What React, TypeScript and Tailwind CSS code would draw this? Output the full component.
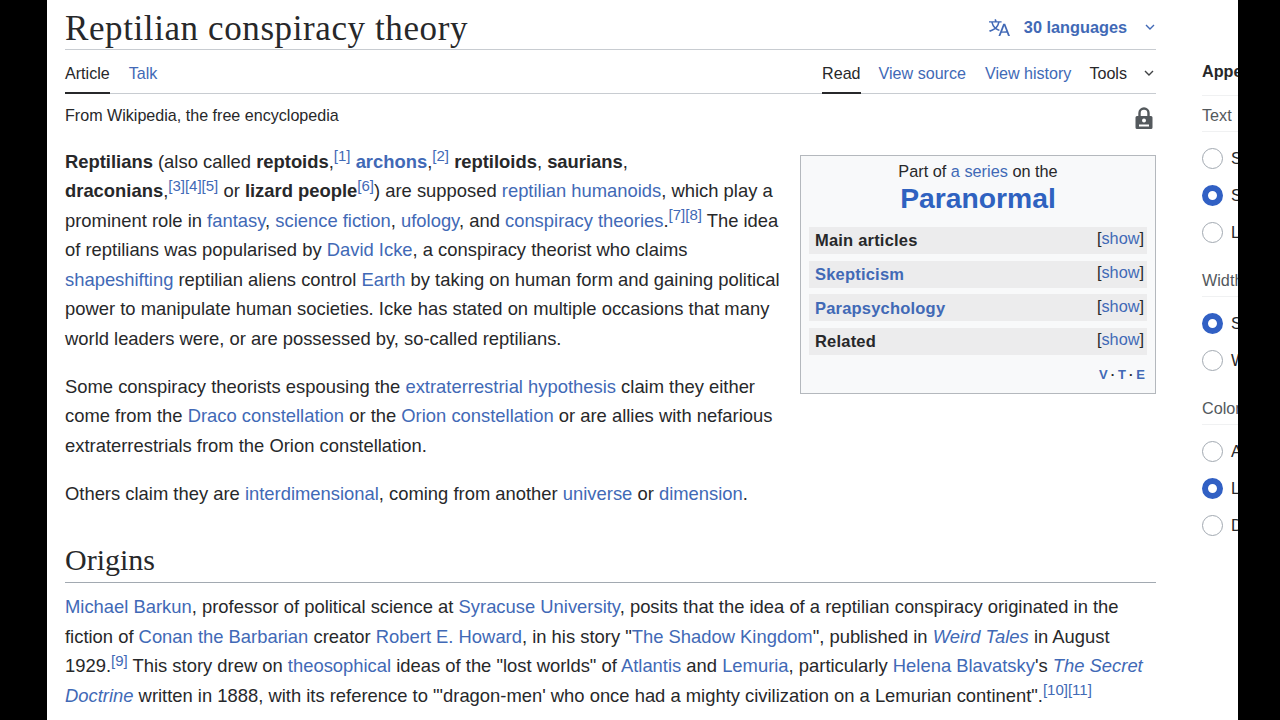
import type { ReactNode } from "react";

const L = ({ children }: { children: ReactNode }) => (
  <a className="text-[#4169b6]">{children}</a>
);

const Ref = ({ children }: { children: ReactNode }) => (
  <sup className="text-[15px] leading-none text-[#4169b6] align-baseline top-[-6.5px]">{children}</sup>
);

const B = ({ children }: { children: ReactNode }) => (
  <b className="font-bold">{children}</b>
);

function Chevron({ className }: { className?: string }) {
  return (
    <svg viewBox="0 0 12 12" className={className} fill="none" stroke="currentColor" strokeWidth="1.4">
      <path d="M2 4l4 4 4-4" />
    </svg>
  );
}

function NavRow({ title, linked }: { title: string; linked?: boolean }) {
  return (
    <div className="h-[27px] bg-[#ececed] flex items-center justify-between pl-[6px] pr-[3px]">
      <span className={`text-[16.5px] font-bold tracking-[0.2px] ${linked ? "text-[#4169b6]" : "text-[#27282a]"}`}>{title}</span>
      <span className="text-[16.3px] -mt-[4px]">
        [<L>show</L>]
      </span>
    </div>
  );
}

function Radio({ on }: { on?: boolean }) {
  return on ? (
    <div className="w-[21px] h-[21px] rounded-full border-[6px] border-[#3160c4] bg-white" />
  ) : (
    <div className="w-[21px] h-[21px] rounded-full border border-[#a2a9b1] bg-white" />
  );
}

function SideGroup({ label, opts }: { label: string; opts: [string, boolean][] }) {
  return (
    <div className="mb-[26px]">
      <div className="text-[16.2px] leading-[22px] text-[#54595d] h-[28px] border-b border-[#f0f1f2] whitespace-nowrap">{label}</div>
      <div className="flex flex-col gap-[16px] mt-[16px]">
        {opts.map(([o, on], i) => (
          <div key={i} className="flex items-center gap-[8px] h-[21px]">
            <Radio on={on} />
            <span className="text-[16.2px] whitespace-nowrap">{o}</span>
          </div>
        ))}
      </div>
    </div>
  );
}

export default function App() {
  return (
    <div
      className="w-[1280px] h-[720px] overflow-hidden bg-black flex text-[#27282a]"
      style={{ fontFamily: '"Liberation Sans", Arial, sans-serif' }}
    >
      <div className="ml-[47px] w-[1191px] h-[720px] bg-white overflow-hidden flex pl-[18px]">
        <main className="w-[1091px] shrink-0">
          <div className="h-[50px] border-b border-[#c8ccd1] flex items-start justify-between">
            <h1
              className="text-[35px] tracking-[0.6px] leading-[58px] whitespace-nowrap"
              style={{ fontFamily: '"Liberation Serif", serif' }}
            >
              Reptilian conspiracy theory
            </h1>
            <div className="flex items-center h-[54px] text-[#4169b6]">
              <svg viewBox="0 0 20 20" className="w-[21px] h-[21px]" fill="currentColor">
                <path d="M20 18h-1.44a.6.6 0 0 1-.4-.12.8.8 0 0 1-.23-.31L17 15h-5l-1 2.54a.8.8 0 0 1-.22.3.6.6 0 0 1-.4.14H9l4.55-11.47h1.89zm-3.53-4.31L14.89 9.5a12 12 0 0 1-.39-1.24q-.09.37-.19.69l-.19.56-1.58 4.19zm-6.3-1.58a13.4 13.4 0 0 1-2.91-1.41 11.46 11.46 0 0 0 2.81-5.37H12V4H7.31a4 4 0 0 0-.2-.56C6.87 2.79 6.6 2 6.6 2l-1.47.5s.4.89.6 1.5H0v1.33h2.15A11.23 11.23 0 0 0 5 10.7a17.2 17.2 0 0 1-5 2.1q.56.82.87 1.38a23.3 23.3 0 0 0 5.22-2.51 15.6 15.6 0 0 0 3.56 1.77zM3.63 5.33h4.91a8.1 8.1 0 0 1-2.45 4.45 9.1 9.1 0 0 1-2.46-4.45" />
              </svg>
              <span className="ml-[14px] text-[16.3px] font-bold">30 languages</span>
              <Chevron className="w-[12px] h-[12px] ml-[17px] mr-0" />
            </div>
          </div>

          <div className="h-[44px] border-b border-[#c8ccd1] flex justify-between text-[16.1px]">
            <div className="flex">
              <div className="h-[44px] border-b-2 border-[#27282a] leading-[46px]">Article</div>
              <div className="ml-[19px] leading-[46px] text-[#4169b6]">Talk</div>
            </div>
            <div className="flex">
              <div className="h-[44px] border-b-2 border-[#27282a] leading-[46px]">Read</div>
              <div className="ml-[18px] leading-[46px] text-[#4169b6]">View source</div>
              <div className="ml-[19px] leading-[46px] text-[#4169b6]">View history</div>
              <div className="ml-[18px] leading-[46px]">Tools</div>
              <div className="flex items-center ml-[16px] mr-[1px] mt-[2px] text-[#404244]">
                <Chevron className="w-[12px] h-[12px]" />
              </div>
            </div>
          </div>

          <div className="relative h-[46px] text-[16.1px] leading-[43px]">
            From Wikipedia, the free encyclopedia
            <svg viewBox="0 0 20 24" className="absolute right-[2px] top-[12px] w-[20px] h-[24px]" fill="#54595d">
              <path d="M3 10h14a1.5 1.5 0 0 1 1.5 1.5v10A1.5 1.5 0 0 1 17 23H3a1.5 1.5 0 0 1-1.5-1.5v-10A1.5 1.5 0 0 1 3 10z" />
              <path d="M5.5 10V7a4.5 4.5 0 0 1 9 0v3" fill="none" stroke="#54595d" strokeWidth="2.4" />
              <circle cx="10" cy="14.5" r="2" fill="#fff" />
              <rect x="5" y="18.5" width="10" height="2" fill="#fff" />
            </svg>
          </div>

          <div className="flex justify-between items-start">
            <div className="text-[18.4px] leading-[29.5px] whitespace-nowrap mt-[6.5px]">
              <B>Reptilians</B> (also called <B>reptoids</B>,<Ref>[1]</Ref> <a className="text-[#4169b6] font-bold">archons</a>,<Ref>[2]</Ref> <B>reptiloids</B>, <B>saurians</B>,<br />
              <B>draconians</B>,<Ref>[3][4][5]</Ref> or <B>lizard people</B><Ref>[6]</Ref>) are supposed <L>reptilian humanoids</L>, which play a<br />
              prominent role in <L>fantasy</L>, <L>science fiction</L>, <L>ufology</L>, and <L>conspiracy theories</L>.<Ref>[7][8]</Ref> The idea<br />
              of reptilians was popularised by <L>David Icke</L>, a conspiracy theorist who claims<br />
              <L>shapeshifting</L> reptilian aliens control <L>Earth</L> by taking on human form and gaining political<br />
              power to manipulate human societies. Icke has stated on multiple occasions that many<br />
              world leaders were, or are possessed by, so-called reptilians.
              <p className="mt-[18.5px]">
                Some conspiracy theorists espousing the <L>extraterrestrial hypothesis</L> claim they either<br />
                come from the <L>Draco constellation</L> or the <L>Orion constellation</L> or are allies with nefarious<br />
                extraterrestrials from the Orion constellation.
              </p>
              <p className="mt-[18.5px]">
                Others claim they are <L>interdimensional</L>, coming from another <L>universe</L> or <L>dimension</L>.
              </p>
            </div>

            <aside className="w-[356px] h-[239px] mt-[15px] border border-[#b4b8bd] bg-[#f8f9fa] px-[8px] pt-[6px] shrink-0">
              <div className="text-center text-[16.3px] leading-[19px]">
                Part of <L>a series</L> on the
              </div>
              <div className="text-center text-[28.3px] leading-[33px] font-bold mt-[1px] text-[#2f62c0]">Paranormal</div>
              <div className="flex flex-col gap-[6.7px] mt-[12px]">
                <NavRow title="Main articles" />
                <NavRow title="Skepticism" linked />
                <NavRow title="Parapsychology" linked />
                <NavRow title="Related" />
              </div>
              <div className="text-right text-[13px] font-bold mt-[10px] -mr-[1px] text-[#4169b6] tracking-[3px]">
                V<span className="text-[#27282a]">·</span>T<span className="text-[#27282a]">·</span>E
              </div>
            </aside>
          </div>

          <h2
            className="text-[30px] leading-[36px] h-[41px] mt-[33.5px] border-b border-[#a2a9b1]"
            style={{ fontFamily: '"Liberation Serif", serif' }}
          >
            Origins
          </h2>
          <div className="text-[18.4px] leading-[29.5px] whitespace-nowrap mt-[9.5px]">
            <L>Michael Barkun</L>, professor of political science at <L>Syracuse University</L>, posits that the idea of a reptilian conspiracy originated in the<br />
            fiction of <L>Conan the Barbarian</L> creator <L>Robert E. Howard</L>, in his story "<L>The Shadow Kingdom</L>", published in <i><L>Weird Tales</L></i> in August<br />
            1929.<Ref>[9]</Ref> This story drew on <L>theosophical</L> ideas of the "lost worlds" of <L>Atlantis</L> and <L>Lemuria</L>, particularly <L>Helena Blavatsky</L>'s <i><L>The Secret</L></i><br />
            <i><L>Doctrine</L></i> written in 1888, with its reference to "'dragon-men' who once had a mighty civilization on a Lemurian continent".<Ref>[10][11]</Ref>
          </div>
        </main>

        <div className="ml-[46px] w-[200px] shrink-0">
          <div className="h-[50px]" />
          <div className="text-[16.2px] font-bold h-[46px] leading-[43px] border-b border-[#f0f1f2]">Appearance</div>
          <div className="mt-[8px]">
            <SideGroup label="Text" opts={[["Small", false], ["Standard", true], ["Large", false]]} />
            <SideGroup label="Width" opts={[["Standard", true], ["Wide", false]]} />
            <SideGroup label="Color (beta)" opts={[["Automatic", false], ["Light", true], ["Dark", false]]} />
          </div>
        </div>
      </div>
    </div>
  );
}
